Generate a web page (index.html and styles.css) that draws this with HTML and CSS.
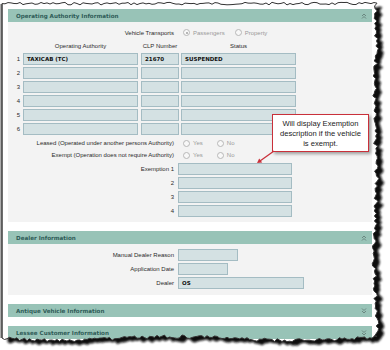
FILE: index.html
```html
<!DOCTYPE html>
<html lang="en">

<head>
    <meta charset="UTF-8">
    <title>Vehicle Record</title>
    <link rel="stylesheet" href="styles.css">
</head>

<body>
    <div class="paper">
        <!-- Operating Authority -->
        <section class="panel">
            <div class="panel-head">
                <span>Operating Authority Information</span>
                <svg class="chev" width="6" height="6" viewBox="0 0 6 6"><path d="M1 3L3 1L5 3M1 5.5L3 3.5L5 5.5" /></svg>
            </div>
            <div class="panel-body oa-body">
                <div class="row transports">
                    <span class="label">Vehicle Transports</span>
                    <span class="radio checked"><i></i>Passengers</span>
                    <span class="radio"><i></i>Property</span>
                </div>

                <div class="oa-row oa-cols">
                    <span class="num"></span>
                    <span class="col-a">Operating Authority</span>
                    <span class="col-b">CLP Number</span>
                    <span class="col-c">Status</span>
                </div>
                <div class="oa-row">
                    <span class="num">1</span>
                    <span class="box col-a">TAXICAB (TC)</span>
                    <span class="box col-b">21670</span>
                    <span class="box col-c">SUSPENDED</span>
                </div>
                <div class="oa-row">
                    <span class="num">2</span>
                    <span class="box col-a"></span><span class="box col-b"></span><span class="box col-c"></span>
                </div>
                <div class="oa-row">
                    <span class="num">3</span>
                    <span class="box col-a"></span><span class="box col-b"></span><span class="box col-c"></span>
                </div>
                <div class="oa-row">
                    <span class="num">4</span>
                    <span class="box col-a"></span><span class="box col-b"></span><span class="box col-c"></span>
                </div>
                <div class="oa-row">
                    <span class="num">5</span>
                    <span class="box col-a"></span><span class="box col-b"></span><span class="box col-c"></span>
                </div>
                <div class="oa-row">
                    <span class="num">6</span>
                    <span class="box col-a"></span><span class="box col-b"></span><span class="box col-c"></span>
                </div>

                <div class="row yn">
                    <span class="label">Leased (Operated under another persons Authority)</span>
                    <span class="radio"><i></i>Yes</span>
                    <span class="radio"><i></i>No</span>
                </div>
                <div class="row yn">
                    <span class="label">Exempt (Operation does not require Authority)</span>
                    <span class="radio"><i></i>Yes</span>
                    <span class="radio"><i></i>No</span>
                </div>

                <div class="fields exemptions">
                    <div class="row field"><span class="label">Exemption 1</span><span class="box w-ex"></span></div>
                    <div class="row field"><span class="label">2</span><span class="box w-ex"></span></div>
                    <div class="row field"><span class="label">3</span><span class="box w-ex"></span></div>
                    <div class="row field"><span class="label">4</span><span class="box w-ex"></span></div>
                </div>
            </div>
        </section>

        <!-- Dealer -->
        <section class="panel">
            <div class="panel-head">
                <span>Dealer Information</span>
                <svg class="chev" width="6" height="6" viewBox="0 0 6 6"><path d="M1 3L3 1L5 3M1 5.5L3 3.5L5 5.5" /></svg>
            </div>
            <div class="panel-body dealer-body fields">
                <div class="row field"><span class="label">Manual Dealer Reason</span><span class="box w-reason"></span></div>
                <div class="row field"><span class="label">Application Date</span><span class="box w-date"></span></div>
                <div class="row field"><span class="label">Dealer</span><span class="box w-dealer">OS</span></div>
            </div>
        </section>

        <section class="panel">
            <div class="panel-head">
                <span>Antique Vehicle Information</span>
                <svg class="chev" width="6" height="6" viewBox="0 0 6 6"><path d="M1 0.5L3 2.5L5 0.5M1 3L3 5L5 3" /></svg>
            </div>
        </section>

        <section class="panel">
            <div class="panel-head">
                <span>Lessee Customer Information</span>
                <svg class="chev" width="6" height="6" viewBox="0 0 6 6"><path d="M1 0.5L3 2.5L5 0.5M1 3L3 5L5 3" /></svg>
            </div>
        </section>

        <!-- Callout -->
        <div class="callout">Will display Exemption description if the vehicle is exempt.</div>
        <svg class="callout-arrow" width="30" height="20" viewBox="0 0 30 20">
            <path d="M18 1L4 11" stroke="#c9303a" stroke-width="1.3" fill="none" />
            <path d="M1 13L3.2 8.6L6.2 12.4Z" fill="#c9303a" />
        </svg>
    </div>

    <svg class="torn" width="390" height="350" viewBox="0 0 390 350">
        <defs>
            <filter id="soft" x="-5%" y="-5%" width="110%" height="110%">
                <feGaussianBlur stdDeviation="1.1" />
            </filter>
            <clipPath id="outside">
                <path id="outsideClip" clip-rule="evenodd" d="" />
            </clipPath>
        </defs>
        <path id="outsideFill" fill="#fff" fill-rule="evenodd" d="" />
        <g clip-path="url(#outside)">
            <path id="shadow" fill="#111" filter="url(#soft)" transform="translate(5.5 4)" d="" />
        </g>
        <path id="edge" fill="none" stroke="#333" stroke-width="1" d="" />
        <line x1="1.6" y1="4" x2="1.6" y2="338" stroke="#5c5c5c" stroke-width="2.2" />
    </svg>

    <script>
        // bordo strappato della carta
        let seed = 7;
        function rnd() {
            seed = (seed * 9301 + 49297) % 233280;
            return seed / 233280;
        }

        const pts = [];
        for (let x = 2; x <= 377; x += 3) pts.push([x, 3.6 + (rnd() - 0.5) * 2.6]);
        for (let y = 6; y <= 336; y += 2.5) pts.push([375.5 + 1.2 * Math.sin(y / 23) + (rnd() - 0.5) * 4.4, y]);
        for (let x = 377; x >= 2; x -= 2.5) pts.push([x, 338.5 + 1.8 * Math.sin(x / 37) + (rnd() - 0.5) * 3.4]);

        const torn = 'M' + pts.map(p => p[0].toFixed(1) + ' ' + p[1].toFixed(1)).join('L') + 'Z';
        const outside = 'M0 0H390V350H0Z' + torn;

        document.getElementById('outsideClip').setAttribute('d', outside);
        document.getElementById('outsideFill').setAttribute('d', outside);
        document.getElementById('shadow').setAttribute('d', torn);
        document.getElementById('edge').setAttribute('d', torn);
    </script>
</body>

</html>
```

FILE: styles.css
```css
body {
    margin: 0;
    width: 390px;
    height: 350px;
    overflow: hidden;
    background-color: #fff;
    font-family: 'Liberation Sans', Arial, sans-serif;
    font-size: 6px;
    color: #2b2b2b;
}

.paper {
    position: relative;
    padding: 9px 18px 0 8px;
}

.panel {
    margin-bottom: 9px;
}

.panel-head {
    height: 13px;
    display: flex;
    align-items: center;
    justify-content: space-between;
    padding: 0 5px 0 8px;
    background-color: #98c3b7;
    color: #2f5c57;
    font-family: 'DejaVu Sans', Verdana, sans-serif;
    font-weight: bold;
    font-size: 5.6px;
}

.chev path {
    fill: none;
    stroke: #5e7772;
    stroke-width: 0.8;
}

.panel-body {
    background-color: #f3f3f3;
}

.oa-body {
    padding: 4px 0 5px;
}

.dealer-body {
    padding: 5px 0 6px;
}

.row {
    display: flex;
    align-items: center;
    height: 12px;
}

.transports {
    height: 13px;
}

.label {
    width: 166px;
    text-align: right;
    white-space: nowrap;
}

.radio {
    display: flex;
    align-items: center;
    color: #9a9a9a;
    margin-left: 9px;
}

.radio + .radio {
    margin-left: 10px;
}

.yn .radio + .radio {
    margin-left: 14px;
}

.radio i {
    width: 5px;
    height: 5px;
    margin-right: 3px;
    border: 1px solid #b8b8b8;
    border-radius: 50%;
    background-color: #f8f8f8;
    display: flex;
    align-items: center;
    justify-content: center;
}

.radio.checked i::after {
    content: '';
    width: 2px;
    height: 2px;
    border-radius: 50%;
    background-color: #a0a0a0;
}

/* tabella autorità */
.oa-row {
    display: flex;
    align-items: center;
    height: 12px;
    margin-bottom: 2px;
}

.oa-cols {
    margin-top: 1px;
    margin-bottom: 1px;
}

.oa-cols span {
    text-align: center;
}

.num {
    width: 15px;
    padding-right: 3px;
    box-sizing: border-box;
    text-align: right;
}

.col-a {
    width: 115px;
}

.col-b {
    width: 38px;
    margin-left: 3px;
}

.col-c {
    width: 115px;
    margin-left: 2px;
}

.box {
    box-sizing: border-box;
    height: 12px;
    display: flex;
    align-items: center;
    padding-left: 3px;
    background-color: #d4e1e3;
    border: 1px solid #a4bcc3;
    font-family: 'DejaVu Sans', Verdana, sans-serif;
    font-weight: bold;
    font-size: 5.5px;
    color: #111;
}

.field .box {
    margin-left: 4px;
}

.exemptions {
    margin-top: 2px;
}

.fields .row + .row {
    margin-top: 2px;
}

.w-ex { width: 114px; }
.w-reason { width: 60px; }
.w-date { width: 50px; }
.w-dealer { width: 126px; }

/* fumetto */
.callout {
    position: absolute;
    left: 272px;
    top: 114px;
    width: 97px;
    height: 38px;
    box-sizing: border-box;
    padding: 4px 5px 0;
    background-color: #fff;
    border: 1.5px solid #c9303a;
    box-shadow: 2px 2px 3px rgba(0, 0, 0, 0.35);
    text-align: center;
    font-size: 7.6px;
    line-height: 10px;
    color: #222;
}

.callout-arrow {
    position: absolute;
    left: 256px;
    top: 150px;
}

.torn {
    position: absolute;
    left: 0;
    top: 0;
}
```
